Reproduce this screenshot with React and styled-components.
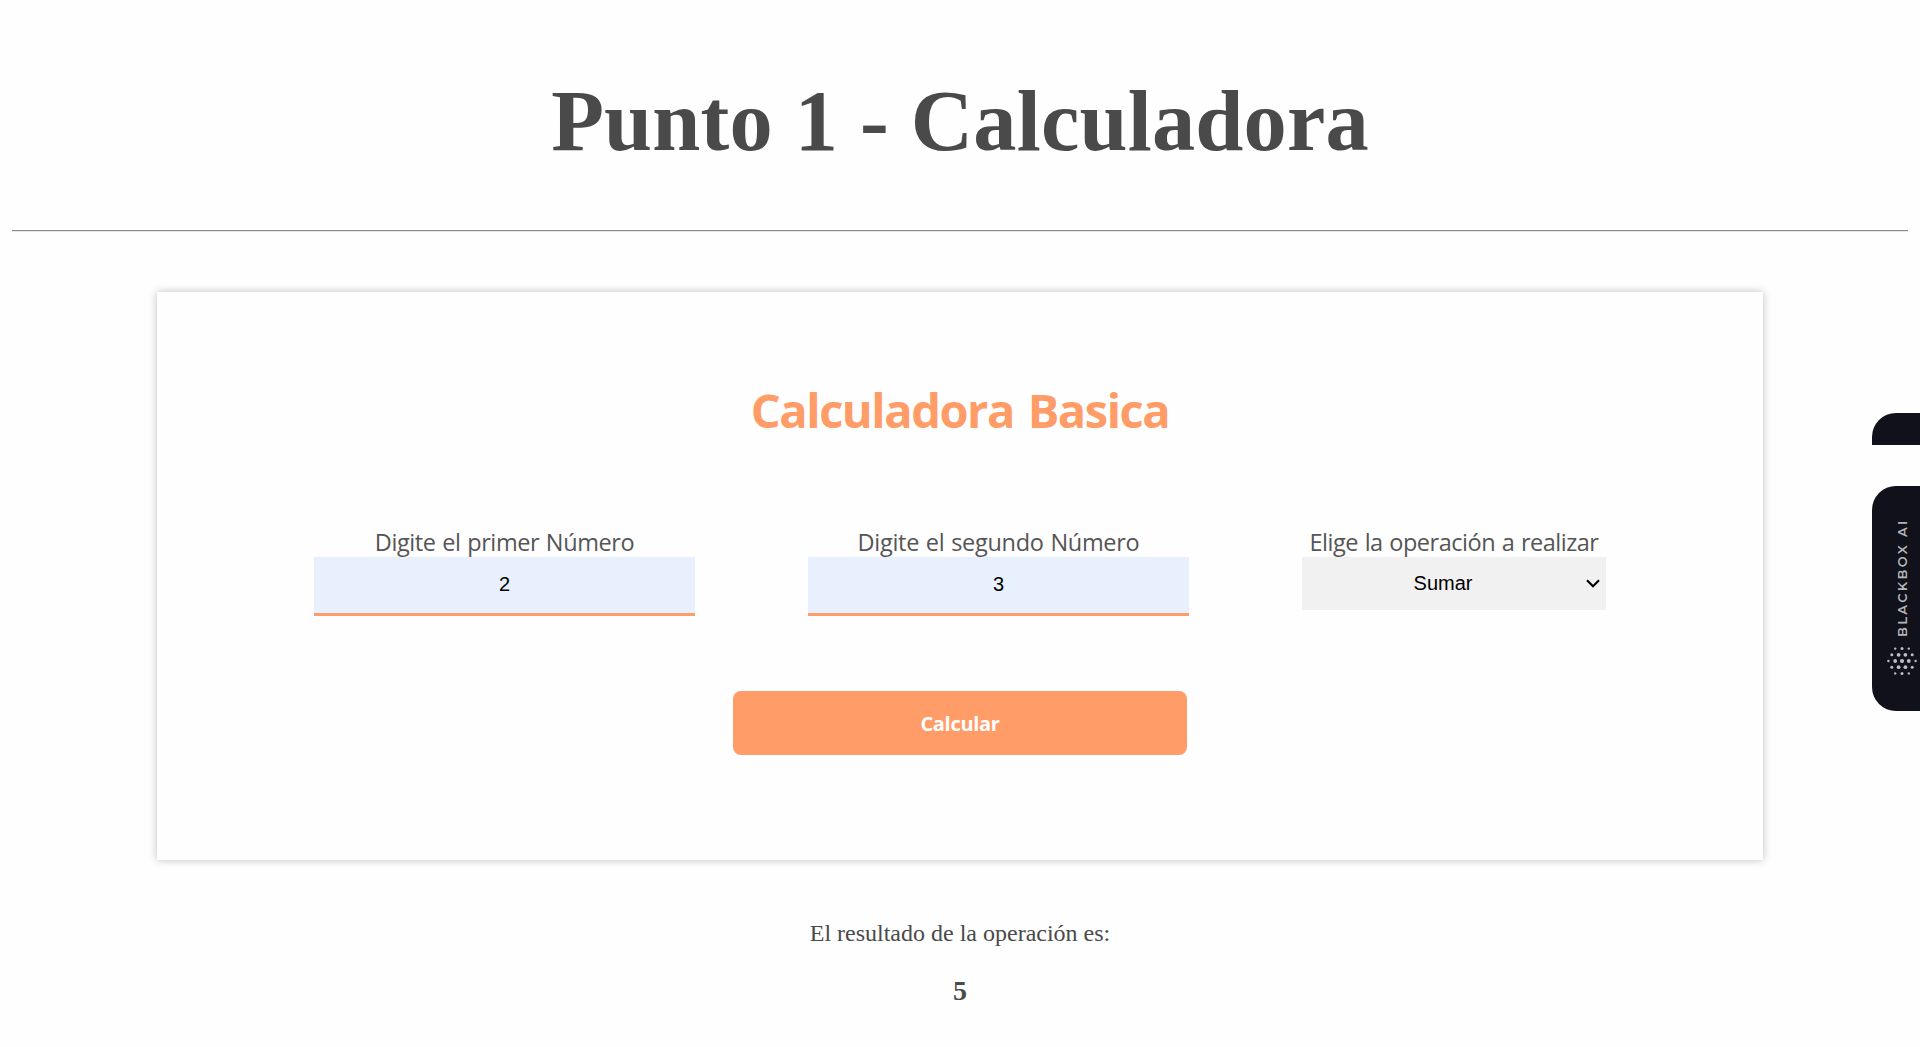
import React, { useState } from "react";
import styled, { createGlobalStyle } from "styled-components";

const GlobalStyle = createGlobalStyle`
  * { box-sizing: border-box; }
  html, body { margin: 0; padding: 0; background: #fefefe; overflow: hidden; }
`;

const serif = `"Times New Roman", "Liberation Serif", serif`;
const sans = `"Segoe UI", "Open Sans", "Noto Sans", sans-serif`;
const accent = "#ff9c67";

const Page = styled.main`
  height: 1047px;
  padding: 0 12px;
  display: flex;
  flex-direction: column;
  align-items: center;
  color: #4a4a4a;
  font-family: ${serif};
`;

const Title = styled.h1`
  margin: 72px 0 0;
  height: 158px;
  font-size: 86.4px;
  line-height: 98px;
  letter-spacing: 0.2px;
  white-space: nowrap;
`;

const Divider = styled.hr`
  width: 100%;
  height: 2px;
  margin: 0;
  border: 0;
  border-top: 1px solid #8a8a8a;
  border-bottom: 1px solid #e6e6e6;
`;

const Card = styled.form`
  width: 1606px;
  height: 568px;
  margin-top: 60px;
  padding-top: 84px;
  display: flex;
  flex-direction: column;
  align-items: center;
  background: #fefefe;
  box-shadow: 0 0 8px rgba(0, 0, 0, 0.25);
  font-family: ${sans};
`;

const CardTitle = styled.h2`
  margin: 0;
  height: 142px;
  font-size: 47px;
  font-weight: 700;
  line-height: 68px;
  letter-spacing: ${(p) => p.$tracking};
  word-spacing: 3px;
  color: ${accent};
  white-space: nowrap;
`;

const Fields = styled.div`
  width: 1292px;
  display: flex;
  justify-content: space-between;
  align-items: flex-start;
`;

const Field = styled.div`
  width: ${(p) => p.$width}px;
  display: flex;
  flex-direction: column;
  align-items: center;
`;

const Label = styled.label`
  height: 39px;
  padding-top: 8px;
  font-size: 23.5px;
  line-height: 32px;
  letter-spacing: ${(p) => p.$tracking};
  word-spacing: 1px;
  color: #555;
  white-space: nowrap;
`;

const NumberInput = styled.input`
  width: 100%;
  height: 59px;
  padding: 0 0 1px;
  border: 0;
  border-bottom: 3px solid ${accent};
  border-radius: 0;
  outline: 0;
  background: #e8f0fe;
  color: #000;
  font: 20px Arial, "Liberation Sans", sans-serif;
  text-align: center;
`;

const SelectBox = styled.div`
  width: 100%;
  height: 53px;
  display: grid;
  align-items: center;
  background: #f1f1f1;
  > * { grid-area: 1 / 1; }
`;

const Select = styled.select`
  appearance: none;
  width: 100%;
  height: 53px;
  padding: 0 22px 2px 0;
  border: 0;
  outline: 0;
  background: transparent;
  color: #000;
  font: 20px Arial, "Liberation Sans", sans-serif;
  text-align: center;
  text-align-last: center;
`;

const Chevron = styled.svg`
  justify-self: end;
  margin-right: 6px;
  width: 14px;
  height: 9px;
  pointer-events: none;
`;

const Submit = styled.button`
  width: 454px;
  height: 64px;
  margin-top: 75px;
  padding: 1px 0 0;
  border: 0;
  border-radius: 8px;
  background: ${accent};
  color: #fff;
  font-family: ${sans};
  font-size: 20px;
  font-weight: 700;
  letter-spacing: ${(p) => p.$tracking};
`;

const ResultLabel = styled.p`
  margin: 59px 0 0;
  font-size: 24px;
  line-height: 28px;
`;

const Result = styled.strong`
  margin-top: 27px;
  font-size: 28px;
  line-height: 34px;
`;

const Dock = styled.aside`
  position: fixed;
  top: 413px;
  right: 0;
  width: 48px;
  display: flex;
  flex-direction: column;
  gap: 41px;
`;

const DockCap = styled.div`
  height: 32px;
  border-radius: 24px 0 0 0;
  background: #10111a;
`;

const DockTab = styled.div`
  height: 225px;
  padding: 35px 0 0 12px;
  display: flex;
  flex-direction: column;
  align-items: center;
  border-radius: 24px 0 0 24px;
  background: #10111a;
`;

const DockText = styled.span`
  height: 116px;
  margin-right: 1px;
  writing-mode: vertical-rl;
  transform: rotate(180deg);
  color: #b5b5b8;
  font: 600 13px/16px Montserrat, Inter, sans-serif;
  letter-spacing: 2.3px;
  white-space: nowrap;
`;

const Dots = styled.svg`
  width: 32px;
  height: 30px;
  margin-top: 9px;
  fill: #bdbdbf;
`;

const dotRows = [
  [1.2, 1.5, 1.2],
  [1.5, 1.9, 1.9, 1.5],
  [1.2, 1.9, 2.1, 1.9, 1.2],
  [1.5, 1.9, 1.9, 1.5],
  [1.2, 1.5, 1.2],
];

function DotLogo() {
  return (
    <Dots viewBox="0 0 32 30">
      {dotRows.map((row, r) =>
        row.map((radius, c) => (
          <circle
            key={`${r}-${c}`}
            cx={16 + (c - (row.length - 1) / 2) * 6.8}
            cy={15 + (r - 2) * 6.2}
            r={radius}
          />
        ))
      )}
    </Dots>
  );
}

const operations = {
  Sumar: (a, b) => a + b,
};

export default function App() {
  const [first, setFirst] = useState("2");
  const [second, setSecond] = useState("3");
  const [operation, setOperation] = useState("Sumar");
  const [result, setResult] = useState(5);

  const submit = (event) => {
    event.preventDefault();
    setResult(operations[operation](Number(first), Number(second)));
  };

  return (
    <>
      <GlobalStyle />
      <Page>
        <Title>Punto 1 - Calculadora</Title>
        <Divider />
        <Card onSubmit={submit}>
          <CardTitle $tracking="-1.45px">Calculadora Basica</CardTitle>
          <Fields>
            <Field $width={381}>
              <Label htmlFor="first" $tracking="-0.42px">Digite el primer Número</Label>
              <NumberInput id="first" value={first} onChange={(e) => setFirst(e.target.value)} />
            </Field>
            <Field $width={381}>
              <Label htmlFor="second" $tracking="-0.3px">Digite el segundo Número</Label>
              <NumberInput id="second" value={second} onChange={(e) => setSecond(e.target.value)} />
            </Field>
            <Field $width={304}>
              <Label htmlFor="operation" $tracking="-0.48px">Elige la operación a realizar</Label>
              <SelectBox>
                <Select id="operation" value={operation} onChange={(e) => setOperation(e.target.value)}>
                  <option>Sumar</option>
                </Select>
                <Chevron viewBox="0 0 14 9" fill="none" stroke="#000" strokeWidth="2.2">
                  <path d="M1 1.2 7 7.2 13 1.2" />
                </Chevron>
              </SelectBox>
            </Field>
          </Fields>
          <Submit type="submit" $tracking="-0.3px">Calcular</Submit>
        </Card>
        <ResultLabel>El resultado de la operación es:</ResultLabel>
        <Result>{result}</Result>
      </Page>
      <Dock>
        <DockCap />
        <DockTab>
          <DockText>BLACKBOX AI</DockText>
          <DotLogo />
        </DockTab>
      </Dock>
    </>
  );
}
